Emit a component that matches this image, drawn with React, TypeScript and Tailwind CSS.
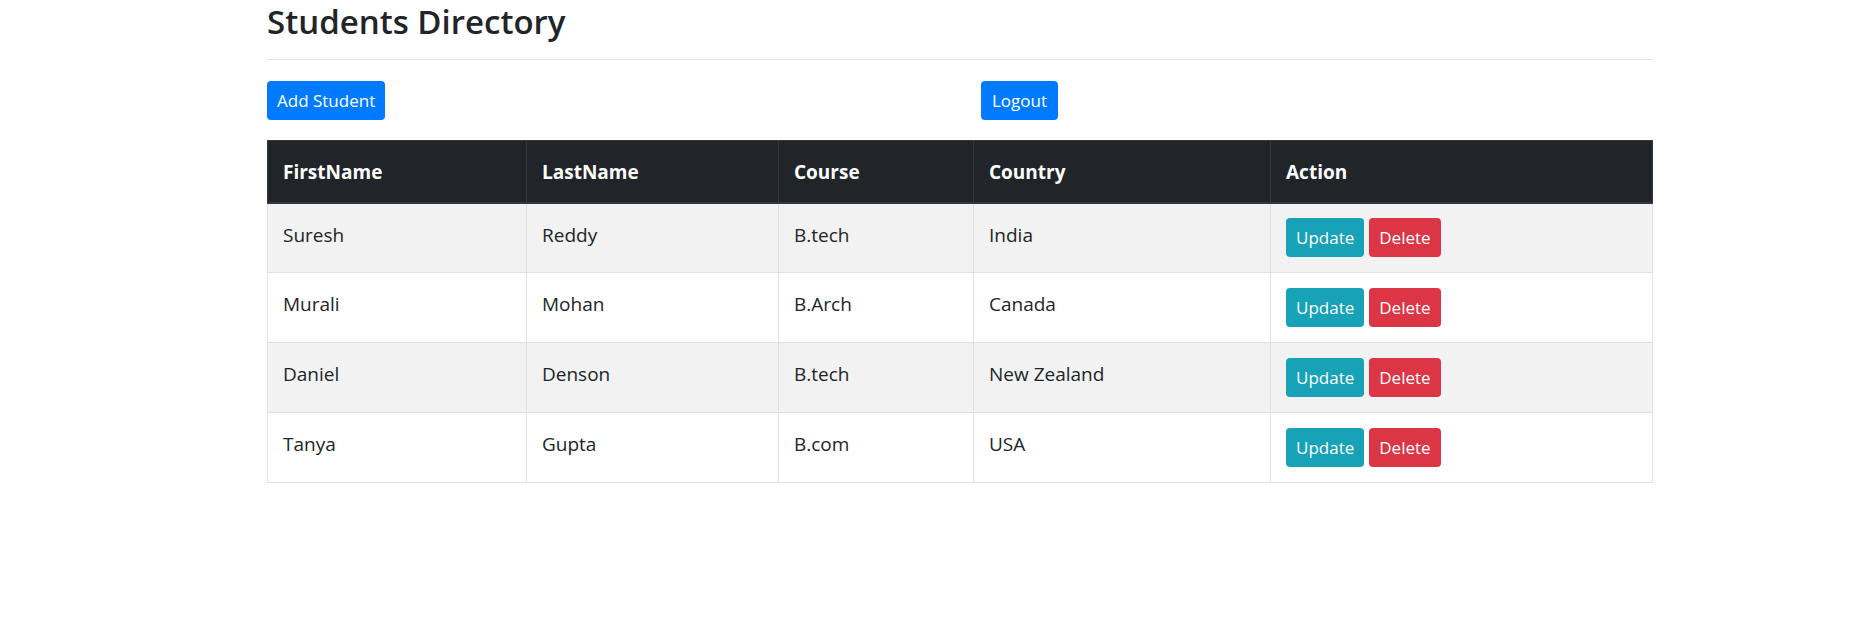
import React from "react";

type Student = {
  firstName: string;
  lastName: string;
  course: string;
  country: string;
};

const students: Student[] = [
  { firstName: "Suresh", lastName: "Reddy", course: "B.tech", country: "India" },
  { firstName: "Murali", lastName: "Mohan", course: "B.Arch", country: "Canada" },
  { firstName: "Daniel", lastName: "Denson", course: "B.tech", country: "New Zealand" },
  { firstName: "Tanya", lastName: "Gupta", course: "B.com", country: "USA" },
];

const font = { fontFamily: '"Segoe UI", "Open Sans", "Noto Sans", sans-serif' };

export default function App() {
  return (
    <div className="min-h-screen bg-white text-[#212529]" style={font}>
      <div className="ml-[267px] w-[1386px]">
        {/* TITLE */}
        <h3 className="text-[33px] leading-[44px] font-semibold text-[#212529]">
          Students Directory
        </h3>
        <div className="mt-[15px] border-t border-[#e5e5e5]" />

        {/* ACTIONS */}
        <div className="grid grid-cols-2 gap-[40px] mt-[21px]">
          <div>
            <button className="h-[39px] px-[10px] rounded-[4px] bg-[#007bff] text-white text-[17px]">
              Add Student
            </button>
          </div>
          <div>
            <button className="h-[39px] px-[11px] rounded-[4px] bg-[#007bff] text-white text-[17px] ml-[1px]">
              Logout
            </button>
          </div>
        </div>

        {/* TABLE */}
        <table className="mt-[20px] w-full border-collapse table-fixed text-[19px]">
          <colgroup>
            <col className="w-[259px]" />
            <col className="w-[252px]" />
            <col className="w-[195px]" />
            <col className="w-[297px]" />
            <col />
          </colgroup>
          <thead>
            <tr className="bg-[#212529] text-white h-[62px]">
              {["FirstName", "LastName", "Course", "Country", "Action"].map((h) => (
                <th
                  key={h}
                  className="text-left font-bold pl-[15px] pt-[2px] border border-[#32383e] border-b-2"
                >
                  {h}
                </th>
              ))}
            </tr>
          </thead>
          <tbody>
            {students.map((s, i) => (
              <tr key={s.firstName} className={i % 2 === 0 ? "bg-[#f2f2f2] h-[70px]" : "bg-white h-[70px]"}>
                <td className="border border-[#dee2e6] pl-[15px] pb-[6px]">{s.firstName}</td>
                <td className="border border-[#dee2e6] pl-[15px] pb-[6px]">{s.lastName}</td>
                <td className="border border-[#dee2e6] pl-[15px] pb-[6px]">{s.course}</td>
                <td className="border border-[#dee2e6] pl-[15px] pb-[6px]">{s.country}</td>
                <td className="border border-[#dee2e6] pl-[15px]">
                  <div className="flex gap-[5px]">
                    <button className="h-[39px] px-[10px] rounded-[4px] bg-[#17a2b8] text-white text-[17px]">
                      Update
                    </button>
                    <button className="h-[39px] px-[10px] rounded-[4px] bg-[#dc3545] text-white text-[17px]">
                      Delete
                    </button>
                  </div>
                </td>
              </tr>
            ))}
          </tbody>
        </table>
      </div>
    </div>
  );
}
